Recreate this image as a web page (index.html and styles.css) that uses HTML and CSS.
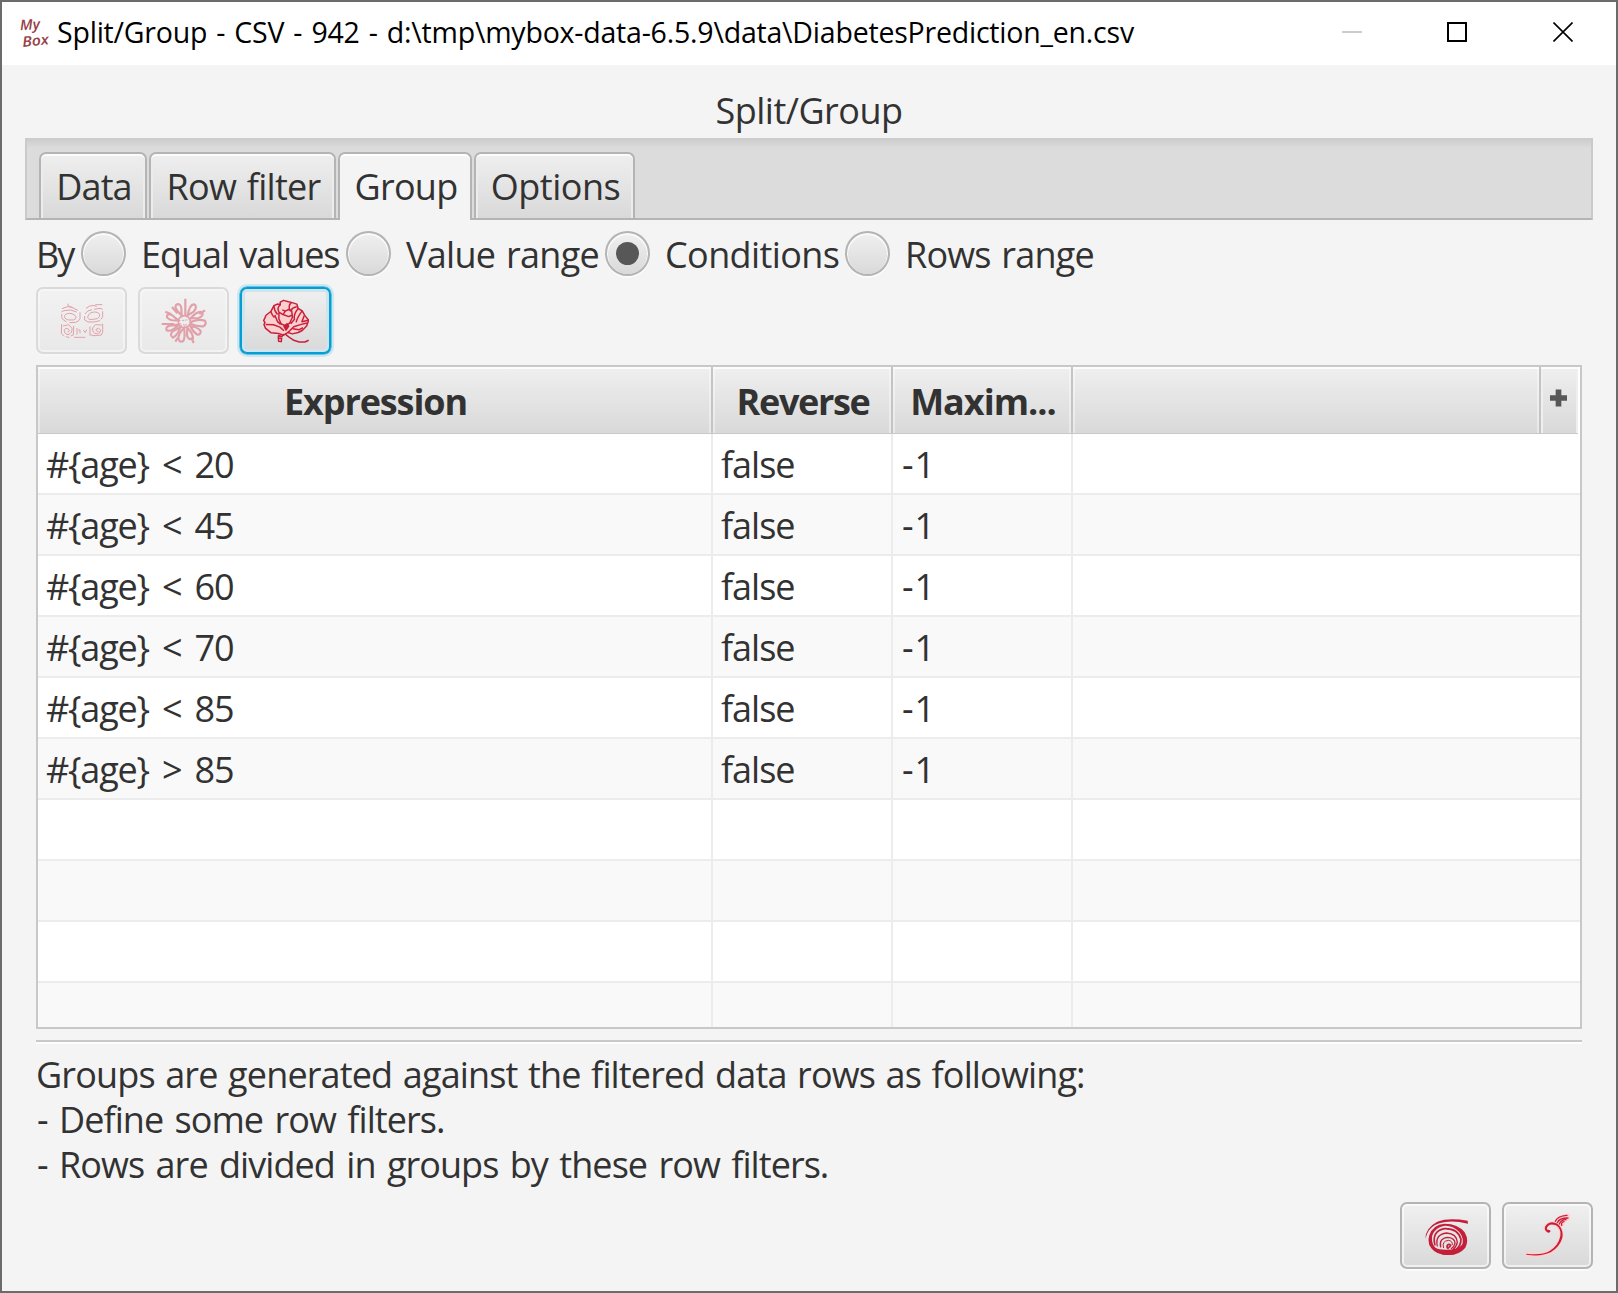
FILE: index.html
```html
<!DOCTYPE html>
<html lang="en">
<head>
<meta charset="utf-8">
<title>Split/Group</title>
<link rel="stylesheet" href="styles.css">
</head>
<body>
<div class="window">
  <header class="titlebar">
    <svg class="logo" viewBox="0 0 90 96" aria-hidden="true">
      <text class="logo-text" x="4" y="43" textLength="60" lengthAdjust="spacingAndGlyphs" transform="rotate(-4 4 43)">My</text>
      <text class="logo-text" x="11" y="93" textLength="80" lengthAdjust="spacingAndGlyphs" transform="rotate(-6 11 93)">Box</text>
    </svg>
    <span class="title">Split/Group - CSV - 942 - d:\tmp\mybox-data-6.5.9\data\DiabetesPrediction_en.csv</span>
    <div class="controls">
      <svg class="control" viewBox="0 0 20 20"><path d="M0 10H20" stroke="#ccc" stroke-width="2"/></svg>
      <svg class="control" viewBox="0 0 20 20"><path d="M1 1H19V19H1Z" fill="none" stroke="#000" stroke-width="2"/></svg>
      <svg class="control" viewBox="0 0 20 20"><path d="M.5 .5L19.5 19.5M19.5 .5L.5 19.5" stroke="#000" stroke-width="1.6"/></svg>
    </div>
  </header>

  <main class="content">
    <h1 class="heading">Split/Group</h1>

    <nav class="tabs">
      <div class="tab tab-data">Data</div>
      <div class="tab tab-filter">Row filter</div>
      <div class="tab tab-group selected">Group</div>
      <div class="tab tab-options">Options</div>
    </nav>

    <section class="panel">
      <div class="radios">
        <span class="by">By</span>
        <label class="radio radio-equal"><i class="dot"></i><span>Equal values</span></label>
        <label class="radio radio-value"><i class="dot"></i><span>Value range</span></label>
        <label class="radio radio-conditions"><i class="dot checked"></i><span>Conditions</span></label>
        <label class="radio radio-rows"><i class="dot"></i><span>Rows range</span></label>
      </div>

      <div class="toolbar">
        <button class="button disabled" aria-label="Delete">
          <svg class="icon" viewBox="85 52 138 138" fill="none" stroke="#c7253b" stroke-width="3">
            <path d="M94 84Q110 74 126 80M112 69V75L142 89M92 94L100 90L120 88L138 94M94 100Q90 108 96 116L108 124M148 95V114L142 122L134 125L116 126M101 108Q102 98 118 98Q137 101 136 113Q132 120 118 118Q103 118 101 108Z"/>
            <path d="M194 72H215M166 83Q176 74 190 74L198 78M190 86L208 83L216 86M163 100Q168 89 184 87M162 106V118L172 124L190 124L208 120M216 92V108L211 116M171 110Q174 94 192 94Q208 94 207 107Q203 116 188 116Q173 119 171 110Z"/>
            <path d="M93 130L92 158L100 167M97 136L114 132L124 143Q125 158 112 162Q100 160 101 149Q104 140 113 145Q120 153 110 154M120 166L128 163L129 136M130 170H164M139 142V162M143 148H148V158M158 148L164 156L168 147M180 162Q186 166 196 165L212 163L216 155V129M213 133L194 132L186 142Q184 158 199 160Q211 157 210 148Q204 139 197 145Q194 153 204 152M178 137V165M106 168L116 171"/>
          </svg>
        </button>
        <button class="button disabled" aria-label="Edit">
          <svg class="icon" viewBox="391 52 138 138" fill="none" stroke="#c7253b" stroke-width="6.5">
            <circle cx="461" cy="123" r="18" stroke-width="5"/>
            <path d="M454 119H461M464 118H470M457 132Q463 136 468 131" stroke-width="3"/>
            <path d="M453 104Q429 83 436 73Q448 65 452 82Z"/>
            <path d="M471 104Q477 70 490 71Q502 77 489 93Z"/>
            <path d="M480 113Q499 90 514 94Q521 105 504 112Z"/>
            <path d="M482 123Q504 114 523 120Q529 131 518 137Q500 138 482 131Z"/>
            <path d="M479 136Q501 139 510 151Q510 163 500 162Q486 153 479 136Z"/>
            <path d="M470 141Q487 158 487 173Q475 181 469 165Z"/>
            <path d="M460 142Q465 171 457 182Q444 186 443 171Q445 156 460 142Z"/>
            <path d="M449 139Q442 163 427 171Q416 164 425 153Z"/>
            <path d="M444 132Q422 155 408 149Q403 138 420 134Z"/>
            <path d="M443 119Q419 122 409 110Q407 98 422 102Z"/>
            <path d="M464 54V103M393 130H430M404 93L420 100M424 79L440 98M523 89L506 100M489 187L482 170M434 183L441 172"/>
          </svg>
        </button>
        <button class="button focused" aria-label="Add">
          <svg class="icon" viewBox="99 54 136 136" stroke="#c7203c" stroke-width="4.4" fill="#fbd0ce" stroke-linejoin="round">
            <path d="M101 121L108 105L122 94L131 77L141 72L150 74V66L160 61L174 65L183 67L199 72L203 85L215 92L223 106L234 120L228 137L215 150L203 156L186 160L172 156L160 164L145 159L123 157L106 143L102 132L105 127Z"/>
            <path fill="none" d="M122 94Q126 106 133 112M131 77Q132 92 142 103M150 74Q139 84 146 95M183 67Q171 79 180 92Q188 81 199 80M203 85Q188 103 192 117L181 130M215 92Q200 111 197 126M221 106L214 124L233 120M146 96L158 103L165 93L156 89M165 93L175 88L184 93L186 111L178 128L166 136L153 131L146 116L146 96M158 103L175 109L184 105M134 104L142 124L151 132M107 132L130 133L149 140L161 151M178 151L190 139L212 132L229 128M187 145L205 148L217 142M172 156L178 151"/>
            <path fill="none" d="M160 160L155 168L145 165L144 173L154 173L153 183L145 182L145 175M164 160L175 169L190 179L206 184L223 184L234 179"/>
            <path d="M170 130L175 137L167 149L161 138Z" fill="#c7203c"/>
          </svg>
        </button>
      </div>

      <div class="table">
        <div class="row head">
          <div class="cell c1">Expression</div><div class="cell c2">Reverse</div><div class="cell c3">Maxim...</div><div class="cell c4"></div>
          <div class="corner"><svg class="plus" viewBox="0 0 18 18"><path d="M6 0h6v6h6v6h-6v6H6v-6H0V6h6z" fill="#575757"/></svg></div>
        </div>
        <div class="row"><div class="cell c1">#{age} &lt; 20</div><div class="cell c2">false</div><div class="cell c3">-1</div><div class="cell c4"></div></div>
        <div class="row"><div class="cell c1">#{age} &lt; 45</div><div class="cell c2">false</div><div class="cell c3">-1</div><div class="cell c4"></div></div>
        <div class="row"><div class="cell c1">#{age} &lt; 60</div><div class="cell c2">false</div><div class="cell c3">-1</div><div class="cell c4"></div></div>
        <div class="row"><div class="cell c1">#{age} &lt; 70</div><div class="cell c2">false</div><div class="cell c3">-1</div><div class="cell c4"></div></div>
        <div class="row"><div class="cell c1">#{age} &lt; 85</div><div class="cell c2">false</div><div class="cell c3">-1</div><div class="cell c4"></div></div>
        <div class="row"><div class="cell c1">#{age} &gt; 85</div><div class="cell c2">false</div><div class="cell c3">-1</div><div class="cell c4"></div></div>
        <div class="row"><div class="cell c1"></div><div class="cell c2"></div><div class="cell c3"></div><div class="cell c4"></div></div>
        <div class="row"><div class="cell c1"></div><div class="cell c2"></div><div class="cell c3"></div><div class="cell c4"></div></div>
        <div class="row"><div class="cell c1"></div><div class="cell c2"></div><div class="cell c3"></div><div class="cell c4"></div></div>
        <div class="row"><div class="cell c1"></div><div class="cell c2"></div><div class="cell c3"></div><div class="cell c4"></div></div>
      </div>

      <hr class="separator">

      <div class="help">
        <p>Groups are generated against the filtered data rows as following:</p>
        <p class="item">- Define some row filters.</p>
        <p class="item">- Rows are divided in groups by these row filters.</p>
      </div>
    </section>

    <footer class="footer">
      <button class="button" aria-label="Cancel">
        <svg class="icon" viewBox="129 99 138 138" fill="none" stroke="#c41e3a">
          <path d="M136 176Q137 143 172 125Q205 112 263 122L264 131Q211 119 178 130Q150 140 142 160Q139 168 136 176Z" fill="#c41e3a" stroke="none"/>
          <path fill-rule="evenodd" fill="#c41e3a" stroke="none" d="M148 166Q158 134 194 131Q234 131 254 157Q268 181 256 203Q238 225 206 225Q170 226 154 205Q141 189 148 166ZM157 166Q152 188 167 204Q178 214 204 215Q234 212 247 193Q252 172 237 155Q219 136 194 137Q164 143 157 166Z"/>
          <path stroke-width="5" d="M165 196Q154 153 194 146Q234 145 243 178Q243 198 226 211"/>
          <path stroke-width="4" d="M172 199Q164 163 200 159Q230 161 232 187Q229 201 218 209"/>
          <path stroke-width="4" d="M182 202Q176 174 204 172Q225 174 225 190Q222 202 213 207"/>
          <path stroke-width="3" d="M191 204Q184 183 206 181Q218 183 217 195"/>
          <path stroke-width="5" d="M206 206Q199 203 202 196Q207 190 212 196Q210 202 205 202"/>
          <path fill="#c41e3a" stroke="none" d="M162 203Q182 211 204 209Q229 209 246 197Q240 222 207 225Q174 226 162 203Z"/>
        </svg>
      </button>
      <button class="button" aria-label="OK">
        <svg class="icon" viewBox="433 97 138 138" fill="none" stroke-linecap="round">
          <g stroke="#ffd0cc" stroke-width="13">
            <path d="M500 151Q491 142 499 134Q512 124 526 131Q545 143 541 168Q535 198 508 214Q484 226 440 220"/>
            <path d="M527 124Q533 108 562 105M536 129Q541 117 562 113M544 132Q546 122 553 119"/>
          </g>
          <path fill="#c41e3a" d="M437 219Q482 225 507 211Q533 195 539 167Q542 143 526 134Q511 128 503 135Q496 141 500 147Q507 147 510 151Q507 158 500 155Q489 148 494 137Q502 125 515 125Q530 126 539 139Q548 152 545 171Q538 197 510 215Q481 229 437 222Z"/>
          <path stroke="#c41e3a" stroke-width="4" d="M524 122Q530 106 559 104M530 126Q536 112 562 112M536 130Q541 117 556 117M543 134Q541 124 550 123"/>
          <circle cx="559" cy="231" r="2" fill="#ffd0cc"/>
        </svg>
      </button>
    </footer>
  </main>
</div>
</body>
</html>
```
FILE: styles.css
```css
* { box-sizing: border-box; }

body {
  margin: 0;
  font-family: "Open Sans", "Noto Sans", sans-serif;
  font-size: 36px;
  line-height: 45px;
  letter-spacing: -0.52px;
  color: #323232;
}

.window {
  display: flex;
  flex-direction: column;
  width: 1618px;
  height: 1293px;
  border: 2px solid #6c6b6c;
  background: #f4f4f4;
  overflow: hidden;
}

.titlebar {
  display: flex;
  align-items: center;
  flex: none;
  height: 63px;
  padding: 0 43px 4px 17px;
  background: #fff;
}
.logo { width: 30px; height: 32px; overflow: visible; }
.logo-text {
  font: italic 600 43px "Open Sans", sans-serif;
  letter-spacing: 0;
  fill: #964046;
}
.title {
  margin-left: 8px;
  padding-top: 2px;
  font-size: 28.5px;
  letter-spacing: -0.21px;
  word-spacing: 1.9px;
  color: #000;
  white-space: pre;
}
.controls { display: flex; gap: 85px; margin-left: auto; }
.control { width: 20px; height: 20px; }
.control:last-child { margin-left: 1px; }

.content { display: flex; flex-direction: column; flex: 1; padding: 0 23px 22px; }

.heading {
  height: 73px;
  margin: 0;
  padding-top: 23px;
  font-size: 36px;
  font-weight: 400;
  text-align: center;
}

.tabs {
  display: flex;
  gap: 3px;
  height: 82px;
  padding: 14px 0 0 12px;
  border: solid #b4b4b4;
  border-width: 0 2px 2px;
  border-left-color: #cacaca;
  border-right-color: #cacaca;
  background: linear-gradient(#cacaca, #dcdcdc 10px);
}
.tab {
  height: 66px;
  padding: 10px 0 0 2px;
  border: 2px solid #b4b4b4;
  border-bottom: 0;
  border-radius: 7px 7px 0 0;
  background: linear-gradient(#efefef, #d9d9d9);
  box-shadow: inset 0 2px #fbfbfb, inset 2px 0 #ececec, inset -2px 0 #ececec;
  text-align: center;
}
.tab.selected { height: 68px; background: #f4f4f4; box-shadow: inset 0 2px #fff; }
.tab-data { width: 108px; margin-right: -1px; letter-spacing: -0.9px; }
.tab-filter { width: 187px; margin-right: -1px; letter-spacing: -0.7px; word-spacing: 2px; }
.tab-group { width: 134px; margin-right: -1px; letter-spacing: -0.7px; }
.tab-options { width: 161px; letter-spacing: -0.45px; }

.panel { padding: 0 11px; }

.radios { display: flex; align-items: center; height: 67px; }
.radios span { padding-top: 1px; }
.by { width: 45px; letter-spacing: -2px; }
.radio { display: flex; align-items: center; gap: 15px; white-space: nowrap; word-spacing: 2px; }
.radio-equal { width: 265px; letter-spacing: -1.05px; }
.radio-value { width: 259px; letter-spacing: -0.7px; }
.radio-conditions { width: 240px; letter-spacing: -0.6px; }
.radio-rows { letter-spacing: -0.8px; }
.dot {
  display: grid;
  place-items: center;
  width: 45px;
  height: 45px;
  border: 2px solid #b4b4b4;
  border-radius: 50%;
  background: linear-gradient(#f0f0f0, #d9d9d9);
  box-shadow: inset 0 1px 0 1px #fafafa, 0 2px #fbfbfb;
}
.dot.checked::after {
  content: "";
  width: 23px;
  height: 23px;
  border-radius: 50%;
  background: #575757;
}

.toolbar { display: flex; gap: 11px; }
.button {
  display: grid;
  place-items: center;
  width: 91px;
  height: 67px;
  padding: 0;
  border: 2px solid #b4b4b4;
  border-radius: 7px;
  background: linear-gradient(#f0f0f0, #d9d9d9);
  box-shadow: inset 0 0 0 2px rgba(255, 255, 255, 0.6), 0 2px #fbfbfb;
}
.button.disabled { opacity: 0.4; }
.button.focused {
  border-color: #039ed3;
  box-shadow: 0 0 0 0.5px #039ed3, 0 0 0 3px #cde7f0, inset 0 0 0 3px #cfe4ec;
}
.icon { width: 46px; height: 46px; }

.table {
  height: 664px;
  margin-top: 11px;
  border: 2px solid #c8c8c8;
  background: #fff;
  overflow: hidden;
}
.row { display: flex; height: 61px; }
.row:nth-child(odd) { background: #f9f9f9; }
.cell {
  padding: 8px 0 0 8px;
  border: solid #ececec;
  border-width: 0 2px 2px 0;
  white-space: nowrap;
}
.c1 { width: 675px; letter-spacing: -1.2px; word-spacing: 5px; }
.c2 { width: 180px; letter-spacing: -1px; }
.c3 { width: 180px; padding-left: 9px; letter-spacing: 1px; }
.c4 { flex: 1; border-right: 0; }
.row.head {
  width: 1540px;
  height: 67px;
  border-bottom: 1px solid #c8c8c8;
  background: linear-gradient(#efefef, #d9d9d9);
  font-weight: 700;
}
.head .cell {
  padding: 12px 0 0 2px;
  border-color: #c4c4c4;
  border-bottom: 0;
  box-shadow: inset 0 2px #fcfcfc, inset 2px 0 rgba(255, 255, 255, 0.4), inset -2px 0 rgba(255, 255, 255, 0.4);
  text-align: center;
}
.head .c1 { letter-spacing: -1.1px; }
.head .c2 { letter-spacing: -1.35px; }
.head .c3 { letter-spacing: -1px; }
.head .c4 { border-right: 2px solid #c4c4c4; }
.corner {
  display: flex;
  justify-content: center;
  width: 37px;
  padding: 22px 2px 0 0;
  box-shadow: inset 0 2px #fcfcfc, inset 2px 0 #efefef, inset -2px 0 #efefef;
}
.plus { width: 17px; height: 18px; }

.separator {
  height: 4px;
  margin: 11px 0 0;
  border: solid;
  border-width: 2px 0;
  border-color: #c8c8c8 transparent #fdfdfd;
}

.help { margin-top: 8px; letter-spacing: -0.85px; word-spacing: 2px; }
.help p { margin: 0; }
.help .item { padding-left: 1px; letter-spacing: -0.95px; word-spacing: 3px; }

.footer { display: flex; justify-content: flex-end; gap: 11px; margin-top: auto; }
```
